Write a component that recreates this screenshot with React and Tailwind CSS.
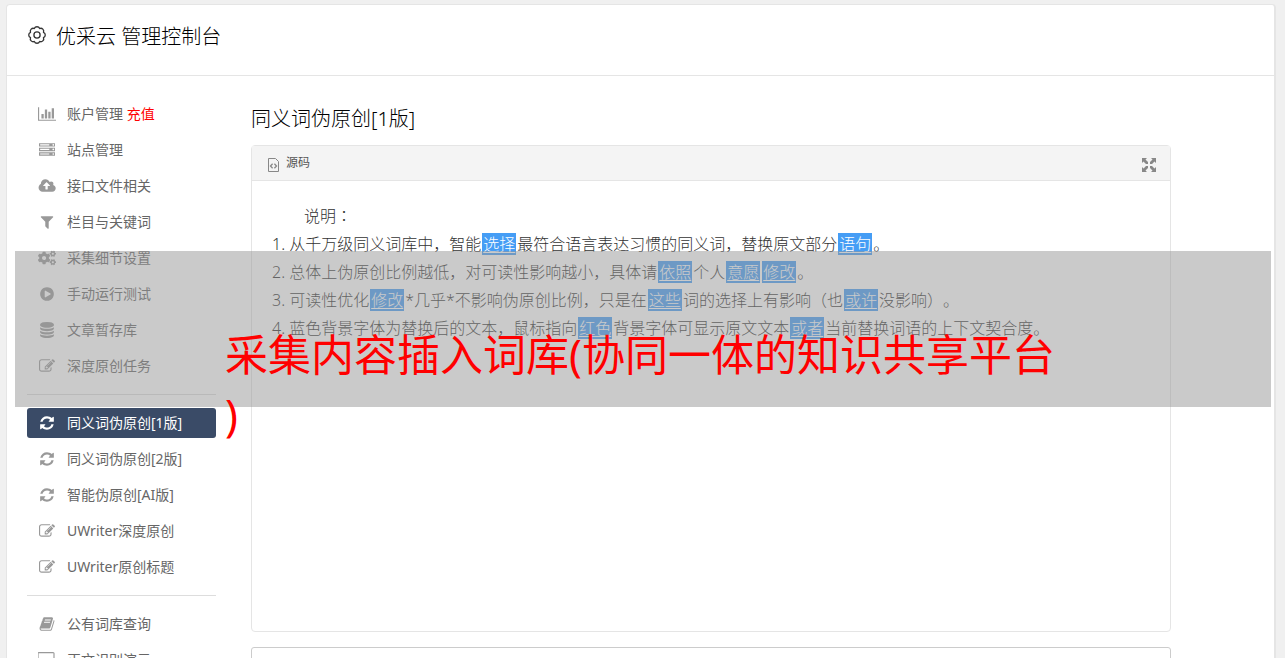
import clsx from "clsx";
import { FaCogs } from "react-icons/fa";

// viewBox width + path for each menu glyph, all 1792 units tall
const ICONS = {
  chart: [2048, "M640 896v512h-256v-512h256zm384-512v1024h-256v-1024h256zm1024 1152v128h-2048v-1536h128v1408h1920zm-640-896v768h-256v-768h256zm384-384v1152h-256v-1152h256z"],
  server: [1792, "M128 1408h1024v-128h-1024v128zm0-512h1024v-128h-1024v128zm1568 448q0-40-28-68t-68-28-68 28-28 68 28 68 68 28 68-28 28-68zm-1568-960h1024v-128h-1024v128zm1568 448q0-40-28-68t-68-28-68 28-28 68 28 68 68 28 68-28 28-68zm0-512q0-40-28-68t-68-28-68 28-28 68 28 68 68 28 68-28 28-68zm96 832v384h-1792v-384h1792zm0-512v384h-1792v-384h1792zm0-512v384h-1792v-384h1792z"],
  upload: [2048, "M1344 864q0-14-9-23l-352-352q-9-9-23-9t-23 9l-351 351q-10 12-10 24 0 14 9 23t23 9h224v352q0 13 9.5 22.5t22.5 9.5h192q13 0 22.5-9.5t9.5-22.5v-352h224q13 0 22.5-9.5t9.5-22.5zm640 288q0 159-112.5 271.5t-271.5 112.5h-1088q-185 0-316.5-131.5t-131.5-316.5q0-130 70-240t188-165q-2-30-2-43 0-212 150-362t362-150q156 0 285.5 87t188.5 231q71-62 166-62 106 0 181 75t75 181q0 76-41 138 130 31 213.5 135.5t83.5 238.5z"],
  filter: [1792, "M1595 295q17 41-14 70l-493 493v742q0 42-39 59-13 5-25 5-27 0-45-19l-256-256q-19-19-19-45v-486l-493-493q-31-29-14-70 17-39 59-39h1280q42 0 59 39z"],
  play: [1792, "M896 128q209 0 385.5 103t279.5 279.5 103 385.5-103 385.5-279.5 279.5-385.5 103-385.5-103-279.5-279.5-103-385.5 103-385.5 279.5-279.5 385.5-103zm384 823q32-18 32-55t-32-55l-544-320q-31-19-64-1-32 19-32 56v640q0 37 32 56 16 8 32 8 17 0 32-9z"],
  database: [1792, "M896 768q237 0 443-43t325-127v170q0 69-103 128t-280 93.5-385 34.5-385-34.5-280-93.5-103-128v-170q119 84 325 127t443 43zm0 768q237 0 443-43t325-127v170q0 69-103 128t-280 93.5-385 34.5-385-34.5-280-93.5-103-128v-170q119 84 325 127t443 43zm0-384q237 0 443-43t325-127v170q0 69-103 128t-280 93.5-385 34.5-385-34.5-280-93.5-103-128v-170q119 84 325 127t443 43zm0-1152q208 0 385 34.5t280 93.5 103 128v128q0 69-103 128t-280 93.5-385 34.5-385-34.5-280-93.5-103-128v-128q0-69 103-128t280-93.5 385-34.5z"],
  edit: [1792, "M888 1184l116-116-152-152-116 116v56h96v96h56zm440-720q-16-16-33 1l-350 350q-17 17-1 33t33-1l350-350q17-17 1-33zm80 594v190q0 119-84.5 203.5t-203.5 84.5h-832q-119 0-203.5-84.5t-84.5-203.5v-832q0-119 84.5-203.5t203.5-84.5h832q63 0 117 25 15 7 18 23 3 17-9 29l-49 49q-14 14-32 8-23-6-45-6h-832q-66 0-113 47t-47 113v832q0 66 47 113t113 47h832q66 0 113-47t47-113v-126q0-13 9-22l64-64q15-15 35-7t20 29zm-96-738l288 288-672 672h-288v-288zm444 132l-92 92-288-288 92-92q28-28 68-28t68 28l152 152q28 28 28 68t-28 68z"],
  refresh: [1792, "M1639 1056q0 5-1 7-64 268-268 434.5t-478 166.5q-146 0-282.5-55t-243.5-157l-129 129q-19 19-45 19t-45-19-19-45v-448q0-26 19-45t45-19h448q26 0 45 19t19 45-19 45l-137 137q71 66 161 102t187 36q134 0 250-65t186-179q11-17 53-117 8-23 30-23h192q13 0 22.5 9.5t9.5 22.5zm25-800v448q0 26-19 45t-45 19h-448q-26 0-45-19t-19-45 19-45l138-138q-148-137-349-137-134 0-250 65t-186 179q-11 17-53 117-8 23-30 23h-199q-13 0-22.5-9.5t-9.5-22.5v-7q65-268 270-434.5t480-166.5q146 0 284 55.5t245 156.5l130-129q19-19 45-19t45 19 19 45z"],
  book: [1792, "M1703 478q40 57 18 129l-275 906q-19 64-76.5 107.5t-122.5 43.5h-923q-77 0-148.5-53.5t-99.5-131.5q-24-67-2-127 0-4 3-27t4-37q1-8-3-21.5t-3-19.5q2-11 8-21t16.5-23.5 16.5-23.5q23-38 45-91.5t30-91.5q3-10 .5-30t-.5-28q3-11 17-28t17-23q21-36 42-92t25-90q1-9-2.5-32t.5-28q4-13 22-30.5t22-22.5q19-26 42.5-84.5t27.5-96.5q1-8-3-25.5t-2-26.5q2-8 9-18t18-23 17-21q8-12 16.5-30.5t15-35 16-36 19.5-32 26.5-23.5 36-11.5 47.5 5.5l-1 3q38-9 51-9h761q74 0 114 56t18 130l-274 906q-36 119-71.5 153.5t-128.5 34.5h-869q-27 0-38 15-11 16-1 43 24 70 144 70h923q29 0 56-15.5t35-41.5l300-987q7-22 5-57 38 15 59 43zm-1064 2q-4 13 2 22.5t20 9.5h608q13 0 25.5-9.5t16.5-22.5l21-64q4-13-2-22.5t-20-9.5h-608q-13 0-25.5 9.5t-16.5 22.5zm-83 256q-4 13 2 22.5t20 9.5h608q13 0 25.5-9.5t16.5-22.5l21-64q4-13-2-22.5t-20-9.5h-608q-13 0-25.5 9.5t-16.5 22.5z"],
  desktop: [1920, "M1728 992v-832q0-13-9.5-22.5t-22.5-9.5h-1600q-13 0-22.5 9.5t-9.5 22.5v832q0 13 9.5 22.5t22.5 9.5h1600q13 0 22.5-9.5t9.5-22.5zm128-832v1088q0 66-47 113t-113 47h-544q0 37 16 77.5t32 71 16 43.5q0 26-19 45t-45 19h-512q-26 0-45-19t-19-45q0-14 16-44t32-70 16-78h-544q-66 0-113-47t-47-113v-1088q0-66 47-113t113-47h1600q66 0 113 47t47 113z"],
};

const MENU = [
  [
    { icon: "chart", label: "账户管理", extra: "充值" },
    { icon: "server", label: "站点管理" },
    { icon: "upload", label: "接口文件相关" },
    { icon: "filter", label: "栏目与关键词" },
    { icon: "cogs", label: "采集细节设置" },
    { icon: "play", label: "手动运行测试" },
    { icon: "database", label: "文章暂存库" },
    { icon: "edit", label: "深度原创任务" },
  ],
  [
    { icon: "refresh", label: "同义词伪原创[1版]", active: true },
    { icon: "refresh", label: "同义词伪原创[2版]" },
    { icon: "refresh", label: "智能伪原创[AI版]" },
    { icon: "edit", label: "UWriter深度原创" },
    { icon: "edit", label: "UWriter原创标题" },
  ],
  [
    { icon: "book", label: "公有词库查询" },
    { icon: "desktop", label: "正文识别演示" },
  ],
];

function MenuIcon({ name }) {
  if (name === "cogs") return <FaCogs className="h-4 w-[18px]" />;
  const [width, d] = ICONS[name];
  return (
    <svg viewBox={`0 0 ${width} 1792`} className="h-4 w-auto" fill="currentColor" aria-hidden="true">
      <path d={d} />
    </svg>
  );
}

function MenuItem({ item }) {
  return (
    <li>
      <a
        href="#"
        className={clsx(
          "flex h-[30px] items-center gap-[10px] rounded-[3px] px-[10px] text-sm",
          item.active ? "bg-[#3a4b67] text-white" : "text-[#666]"
        )}
      >
        <span className={clsx("flex w-5 shrink-0 justify-center", item.active ? "text-white" : "text-[#999]")}>
          <MenuIcon name={item.icon} />
        </span>
        <span className="whitespace-nowrap">
          {item.label}
          {item.extra && <span className="text-[#f00]"> {item.extra}</span>}
        </span>
      </a>
    </li>
  );
}

// Replaced word with the blue background
function Word({ children }) {
  return <span className="mx-px bg-[#459df5] px-px text-white underline underline-offset-2">{children}</span>;
}

function GearIcon() {
  return (
    <svg viewBox="0 0 18 18" className="h-[18px] w-[18px]" fill="none" stroke="#333" strokeWidth="1.3" strokeLinejoin="round" aria-hidden="true">
      <path d="M6.32 2.53A2.9 2.9 0 0 1 11.68 2.53A2.9 2.9 0 0 1 15.47 6.32A2.9 2.9 0 0 1 15.47 11.68A2.9 2.9 0 0 1 11.68 15.47A2.9 2.9 0 0 1 6.32 15.47A2.9 2.9 0 0 1 2.53 11.68A2.9 2.9 0 0 1 2.53 6.32A2.9 2.9 0 0 1 6.32 2.53Z" />
      <circle cx="9" cy="9" r="3.1" />
    </svg>
  );
}

export default function App() {
  return (
    <div className="relative min-h-screen bg-[#f0f0f0] px-[6px] pt-1 font-['Noto_Sans','Noto_Sans_CJK_SC',sans-serif] text-[#666] [text-spacing-trim:space-all]">
      <div className="mr-[3px] rounded-t-[4px] border border-r-2 border-[#e5e5e5] bg-white">
        {/* Header */}
        <header className="flex h-[71px] items-start gap-[10px] border-b border-[#e5e5e5] px-[21px] pt-[17px]">
          <span className="flex h-[26px] items-center">
            <GearIcon />
          </span>
          <h1 className="text-xl leading-[30px] font-light text-black">优采云 管理控制台</h1>
        </header>

        <div className="flex items-start gap-[35px] px-5 pt-[23px]">
          {/* Side menu */}
          <nav className="w-[189px] shrink-0">
            {MENU.map((group, i) => (
              <ul
                key={i}
                className={clsx("flex flex-col gap-[6px]", i > 0 && "mt-[13px] border-t border-[#ddd] pt-[13px]")}
              >
                {group.map((item) => (
                  <MenuItem key={item.label} item={item} />
                ))}
              </ul>
            ))}
          </nav>

          {/* Editor */}
          <main className="max-w-[920px] flex-1">
            <h2 className="mt-[5px] text-xl leading-[30px] font-light text-black">同义词伪原创[1版]</h2>

            <section className="mt-[11px] rounded-[4px] border border-[#e5e5e5]">
              <div className="flex h-[35px] items-center justify-between border-b border-[#e5e5e5] bg-[#f4f4f4] pr-[14px] pl-4">
                <button className="flex items-center gap-[7px] text-xs text-[#555]">
                  <svg viewBox="0 0 11 14" className="mt-[4px] h-[14px] w-[11px]" fill="none" stroke="#888" aria-hidden="true">
                    <path d="M.5.5h7l3 3v10H.5z" />
                    <path d="M4.6 5.800l-2.100 2.200 2.100 2.200M6.400 5.800l2.100 2.200-2.100 2.200" strokeWidth="1.300" />
                  </svg>
                  源码
                </button>
                <button aria-label="全屏">
                  <svg viewBox="0 0 14 14" className="mt-[4px] h-[14px] w-[14px]" fill="#888" aria-hidden="true">
                    <path d="M0 0h5L3.500 1.500 6 4v2H4L1.500 3.500 0 5z" />
                    <path d="M14 0v5l-1.500-1.500L10 6H8V4l2.500-2.500L9 0z" />
                    <path d="M0 14V9l1.500 1.500L4 8h2v2l-2.500 2.500L5 14z" />
                    <path d="M14 14H9l1.500-1.500L8 10V8h2l2.500 2.500L14 9z" />
                  </svg>
                </button>
              </div>
              <div className="min-h-[450px] p-5 text-base leading-[28px] font-light text-[#333]">
                <p className="indent-8">
                  说明<span lang="zh-TW" className="font-['Noto_Sans_CJK_TC',sans-serif]">：</span>
                </p>
                <p>
                  1. 从千万级同义词库中，智能<Word>选择</Word>最符合语言表达习惯的同义词，替换原文部分<Word>语句</Word>。
                </p>
                <p>
                  2. 总体上伪原创比例越低，对可读性影响越小，具体请<Word>依照</Word>个人<Word>意愿</Word><Word>修改</Word>。
                </p>
                <p>
                  3. 可读性优化<Word>修改</Word>*几乎*不影响伪原创比例，只是在<Word>这些</Word>词的选择上有影响（也<Word>或许</Word>没影响）。
                </p>
                <p>
                  4. 蓝色背景字体为替换后的文本，鼠标指向<Word>红色</Word>背景字体可显示原文文本<Word>或者</Word>当前替换词语的上下文契合度。
                </p>
              </div>
            </section>

            <textarea aria-label="结果" className="mt-[15px] block h-20 w-full resize-none rounded-[3px] border border-[#ccc] p-2" />
          </main>
        </div>
      </div>

      {/* Caption band over the page */}
      <div className="absolute top-[251px] right-[14px] left-[15px] h-[156px] bg-[#969696]/50 pt-[74px]">
        <p className="mx-auto w-[836px] text-[43px] leading-[60px] whitespace-nowrap text-[#f00]">
          采集内容插入词库(协同一体的知识共享平台
          <br />)
        </p>
      </div>
    </div>
  );
}
